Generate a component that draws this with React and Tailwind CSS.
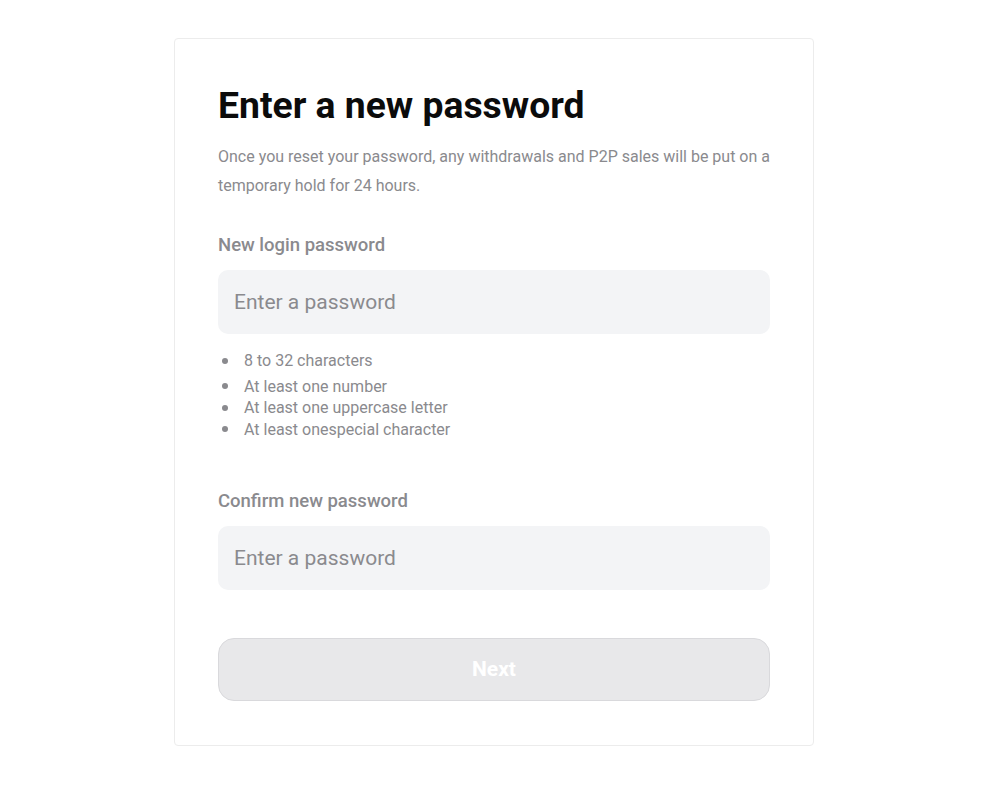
import React, { useState } from "react";

const RULES = [
  "8 to 32 characters",
  "At least one number",
  "At least one uppercase letter",
  "At least onespecial character",
];

const Field = ({ label, value, onChange }) => (
  <div>
    <p className="text-[18.5px] font-medium leading-[24px] text-[#8a8a8e]">{label}</p>
    <input
      type="password"
      value={value}
      onChange={onChange}
      placeholder="Enter a password"
      className="mt-[13px] h-[64px] w-full rounded-[10px] bg-[#f3f4f6] px-[16px] text-[21px] text-[#1a1a1a] placeholder:text-[#8a8a8e] outline-none"
    />
  </div>
);

export default function App() {
  const [pw, setPw] = useState("");
  const [confirm, setConfirm] = useState("");
  const canSubmit = pw.length >= 8 && pw === confirm;

  return (
    <div className="min-h-screen bg-white pt-[38px] font-['Roboto',sans-serif]">
      <div className="mx-auto w-[640px] rounded-[4px] border border-[#ececec] px-[43px] pt-[44px] pb-[44px]">
        <h1 className="text-[37.3px] font-bold leading-[44px] text-[#0b0b0b]">
          Enter a new password
        </h1>
        <p className="mt-[15px] text-[16px] leading-[29px] text-[#8a8a8e]">
          Once you reset your password, any withdrawals and P2P sales will be put on a
          temporary hold for 24 hours.
        </p>

        <div className="mt-[33px]">
          <Field label="New login password" value={pw} onChange={(e) => setPw(e.target.value)} />
        </div>

        <ul className="mt-[16px] text-[16px] text-[#8a8a8e]">
          {RULES.map((r, i) => (
            <li key={r} className={"flex items-center leading-[21.5px] " + (i === 1 ? "mt-[4px]" : "")}>
              <span className="ml-[4px] mr-[16px] h-[6px] w-[6px] rounded-full bg-[#8a8a8e]" />
              {r}
            </li>
          ))}
        </ul>

        <div className="mt-[49px]">
          <Field
            label="Confirm new password"
            value={confirm}
            onChange={(e) => setConfirm(e.target.value)}
          />
        </div>

        <button
          disabled={!canSubmit}
          className={
            "mt-[48px] h-[63px] w-full rounded-[16px] border text-[21px] font-bold text-white " +
            (canSubmit ? "border-[#0b67cd] bg-[#0b67cd]" : "border-[#d9d9dc] bg-[#e8e8ea]")
          }
        >
          Next
        </button>
      </div>
    </div>
  );
}
